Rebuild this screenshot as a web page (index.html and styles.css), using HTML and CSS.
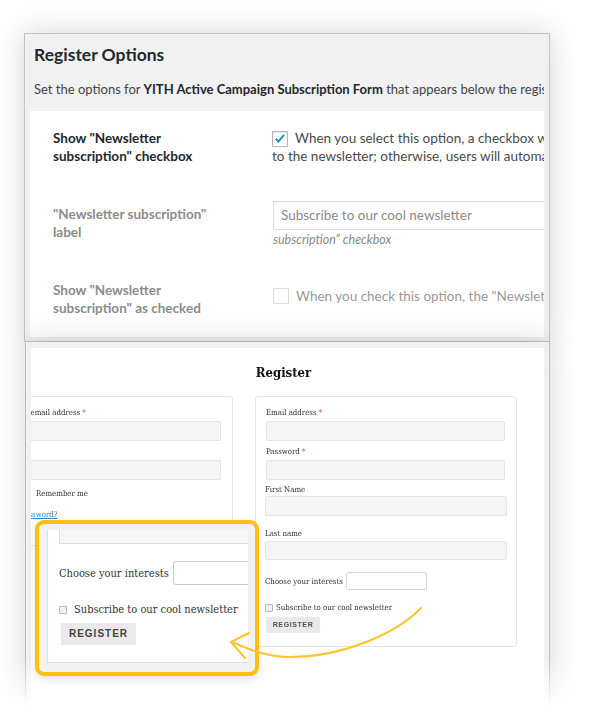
FILE: index.html
```html
<!DOCTYPE html>
<html lang="en">
<head>
    <meta charset="UTF-8">
    <meta name="viewport" content="width=device-width, initial-scale=1.0">
    <title>Register Options</title>
    <link rel="stylesheet" href="styles.css">
</head>
<body>
    <div class="stage">
        <div class="options">
            <h1 class="options-title">Register Options</h1>
            <p class="options-desc">Set the options for <b>YITH Active Campaign Subscription Form</b> that appears below the registration form</p>
            <div class="options-box">
                <div class="opt-row">
                    <div class="opt-label">Show "Newsletter<br>subscription" checkbox</div>
                    <div class="opt-field">
                        <span class="cb"><svg viewBox="0 0 16 16" width="14" height="14"><path d="M3.2 7.6 L6.3 10.8 L12.6 3.2" fill="none" stroke="#1e8cbe" stroke-width="2.2"/></svg></span>When you select this option, a checkbox will be shown to users<br>to the newsletter; otherwise, users will automatically be subscribed
                    </div>
                </div>
                <div class="opt-row row-label">
                    <div class="opt-label muted">"Newsletter subscription"<br>label</div>
                    <div class="opt-field">
                        <div class="opt-input">Subscribe to our cool newsletter</div>
                        <div class="opt-note">subscription” checkbox</div>
                    </div>
                </div>
                <div class="opt-row row-checked">
                    <div class="opt-label muted">Show "Newsletter<br>subscription" as checked</div>
                    <div class="opt-field muted-text">
                        <span class="cb cb-off"></span>When you check this option, the "Newsletter subscription" checkbox will be checked by default
                    </div>
                </div>
            </div>
        </div>

        <div class="preview-fade">
            <div class="preview">
                <div class="preview-body">
                    <h2 class="register-title">Register</h2>
                    <div class="forms">
                        <div class="card">
                            <label class="field-label">Username or email address <span class="req">*</span></label>
                            <div class="field-input"></div>
                            <label class="field-label gap">Password <span class="req">*</span></label>
                            <div class="field-input"></div>
                            <div class="login-row">
                                <span class="btn btn-login">LOG IN</span>
                                <span class="small-cb"></span>
                                <span>Remember me</span>
                            </div>
                            <a class="lost" href="#">Lost your password?</a>
                        </div>
                        <div class="card">
                            <label class="field-label">Email address <span class="req">*</span></label>
                            <div class="field-input"></div>
                            <label class="field-label gap">Password <span class="req">*</span></label>
                            <div class="field-input"></div>
                            <label class="field-label first-name">First Name</label>
                            <div class="field-input wide"></div>
                            <label class="field-label last-name">Last name</label>
                            <div class="field-input wide short"></div>
                            <div class="interests-row">
                                <span>Choose your interests</span>
                                <span class="interests-input"></span>
                            </div>
                            <div class="news-row">
                                <span class="small-cb"></span>
                                <span>Subscribe to our cool newsletter</span>
                            </div>
                            <span class="btn">REGISTER</span>
                        </div>
                    </div>
                </div>
            </div>
        </div>

        <div class="zoom">
            <div class="zoom-clip">
                <div class="zoom-card">
                    <div class="z-input"></div>
                    <div class="z-interests">
                        <span>Choose your interests</span>
                        <span class="z-interests-input"></span>
                    </div>
                    <div class="z-news">
                        <span class="z-cb"></span>
                        <span>Subscribe to our cool newsletter</span>
                    </div>
                    <span class="z-btn">REGISTER</span>
                </div>
            </div>
        </div>

        <svg class="arrow" viewBox="0 0 600 713" width="600" height="713">
            <path d="M421 608 C 398 632, 345 657, 290 657 C 268 657, 250 650, 232 642" fill="none" stroke="#fcc530" stroke-width="2" stroke-linecap="round"/>
            <path d="M249 633 L231 642 L245 658" fill="none" stroke="#fcc530" stroke-width="2" stroke-linecap="round" stroke-linejoin="round"/>
        </svg>
    </div>
</body>
</html>
```

FILE: styles.css
```css
* { box-sizing: border-box; margin: 0; padding: 0; }
body { background: #fff; font-family: Lato, "Open Sans", sans-serif; }

.stage { position: relative; width: 600px; height: 713px; overflow: hidden; padding: 33px 0 0 24px; }

/* admin options panel */
.options { width: 526px; height: 309px; display: flex; flex-direction: column; background: #f1f1f1; border: 1px solid #c4c4c4; box-shadow: 0 0 28px rgba(0, 0, 0, 0.17); padding: 0 5px; }
.options-title { font-size: 17.5px; line-height: 22px; font-weight: 700; color: #23282d; margin: 10px 0 0 4px; }
.options-desc { font-size: 13px; line-height: 18px; color: #444; margin: 14px 0 0 4px; white-space: nowrap; overflow: hidden; }
.options-desc b { color: #23282d; }
.options-box { flex: 1; margin: 13px 0 4px; background: #fff; overflow: hidden; padding: 18px 0 0 23px; }

.opt-row { display: flex; }
.opt-label { width: 219px; flex: none; font-size: 13.5px; line-height: 18px; font-weight: 700; color: #23282d; }
.opt-label.muted { color: #8c8c8c; }
.opt-field { flex: none; font-size: 13.5px; line-height: 18px; color: #4a4a4a; white-space: nowrap; }
.row-label { margin-top: 36px; }
.row-label .opt-label { margin-top: 4px; }
.row-checked { margin-top: 33px; }
.row-checked .opt-field { padding: 6px 0 0 1px; }
.muted-text { color: #9a9a9a; }

.cb { display: inline-flex; align-items: center; justify-content: center; width: 16px; height: 16px; margin-right: 7px; vertical-align: -3px; background: #fff; border: 1px solid #b4b9be; box-shadow: inset 0 1px 2px rgba(0, 0, 0, 0.1); }
.cb-off { border-color: #dcdcdc; box-shadow: none; }

.opt-input { width: 300px; height: 29px; margin-left: 1px; padding: 0 7px; border: 1px solid #ddd; box-shadow: inset 0 1px 2px rgba(0, 0, 0, 0.06); font-size: 13.5px; line-height: 27px; color: #8a8a8a; }
.opt-note { margin: 2px 0 0 1px; font-style: italic; font-size: 12.5px; line-height: 16px; color: #8a8a8a; }

/* frontend preview panel */
.preview-fade { margin: -30px -40px 0; padding: 30px 40px 0; -webkit-mask-image: linear-gradient(#000 345px, transparent 395px); mask-image: linear-gradient(#000 345px, transparent 395px); }
.preview { width: 525px; height: 380px; margin-left: 1px; background: #f1f1f1; border-left: 1px solid #bdbdbd; border-right: 1px solid #bdbdbd; box-shadow: 0 0 28px rgba(0, 0, 0, 0.17); padding: 6px 5px 0; }
.preview-body { height: 100%; background: #fff; overflow: hidden; padding-top: 16px; }

.register-title { text-align: center; padding-right: 8px; font-family: "DejaVu Serif Condensed", "DejaVu Serif", serif; font-size: 13px; line-height: 18px; font-weight: 700; color: #111; }

.forms { display: flex; align-items: flex-start; gap: 22px; margin: 14px 0 0 -60px; }
.card { width: 262px; flex: none; border: 1px solid #e6e6e6; border-radius: 3px; padding: 10px 11px 13px 10px; font-family: "DejaVu Serif Condensed", "DejaVu Serif", serif; font-size: 7.8px; color: #333; }
.card:first-child { padding-bottom: 24px; }
.field-label { display: block; line-height: 12px; }
.field-label.gap { margin-top: 5px; }
.field-label.first-name { margin: 4px 0 0 -1px; }
.field-label.last-name { margin: 12px 0 0 -1px; }
.req { color: #e2401c; }
.field-input { height: 20px; margin-top: 2px; background: #f5f5f5; border: 1px solid #e4e4e4; border-radius: 2px; }
.field-input.wide { margin: 0 -2px 0 -1px; }
.field-input.short { margin-top: 1px; height: 19px; }

.login-row { display: flex; align-items: center; gap: 6px; margin-top: 6px; line-height: 12px; }
.lost { display: block; margin: 7px 0 0 2px; line-height: 12px; color: #2b8ad1; text-decoration: underline; }

.interests-row { display: flex; align-items: center; gap: 3px; margin: 12px 0 0 -1px; }
.interests-input { width: 81px; height: 18px; background: #fff; border: 1px solid #d6d6d6; border-radius: 2px; }
.news-row { display: flex; align-items: center; gap: 3px; margin: 12px 0 0 -1px; line-height: 12px; }
.small-cb { width: 8px; height: 8px; flex: none; background: #f3f3f3; border: 1px solid #bbb; border-radius: 1px; }

.btn { display: inline-block; width: 54px; height: 16px; margin-top: 3px; background: #ebe9eb; font-family: "Liberation Sans", Arial, sans-serif; font-size: 7px; line-height: 16px; font-weight: 700; letter-spacing: 0.6px; text-align: center; color: #515151; }
.btn-login { width: 34px; margin-top: 0; flex: none; }

/* highlighted close-up */
.zoom { position: absolute; left: 35px; top: 520px; width: 224px; height: 156px; background: #f2f2f2; border: 4px solid #fdc00f; border-radius: 9px; padding: 6px 7px 8px 8px; box-shadow: 0 3px 8px rgba(0, 0, 0, 0.12); }
.zoom-clip { height: 100%; overflow: hidden; }
.zoom-card { width: 260px; background: #fff; border-left: 1px solid #dcdcdc; border-bottom: 1px solid #dcdcdc; padding: 0 0 17px 11px; font-family: "DejaVu Serif Condensed", "DejaVu Serif", serif; font-size: 11px; color: #333; }
.z-input { height: 14px; width: 300px; background: #f6f6f6; border: 1px solid #dcdcdc; border-top: none; }
.z-interests { display: flex; align-items: center; gap: 4px; margin-top: 17px; }
.z-interests-input { width: 90px; height: 24px; flex: none; background: #fff; border: 1px solid #ccc; border-radius: 3px; }
.z-news { display: flex; align-items: center; gap: 7px; margin-top: 18px; line-height: 14px; }
.z-cb { width: 8px; height: 8px; flex: none; background: #f0f0f0; border: 1px solid #bbb; border-radius: 1px; }
.z-btn { display: block; width: 75px; height: 22px; margin: 6px 0 0 2px; background: #ebe9eb; font-family: "Liberation Sans", Arial, sans-serif; font-size: 10px; line-height: 22px; font-weight: 700; letter-spacing: 1px; text-align: center; color: #444; }

.arrow { position: absolute; left: 0; top: 0; pointer-events: none; }
```
